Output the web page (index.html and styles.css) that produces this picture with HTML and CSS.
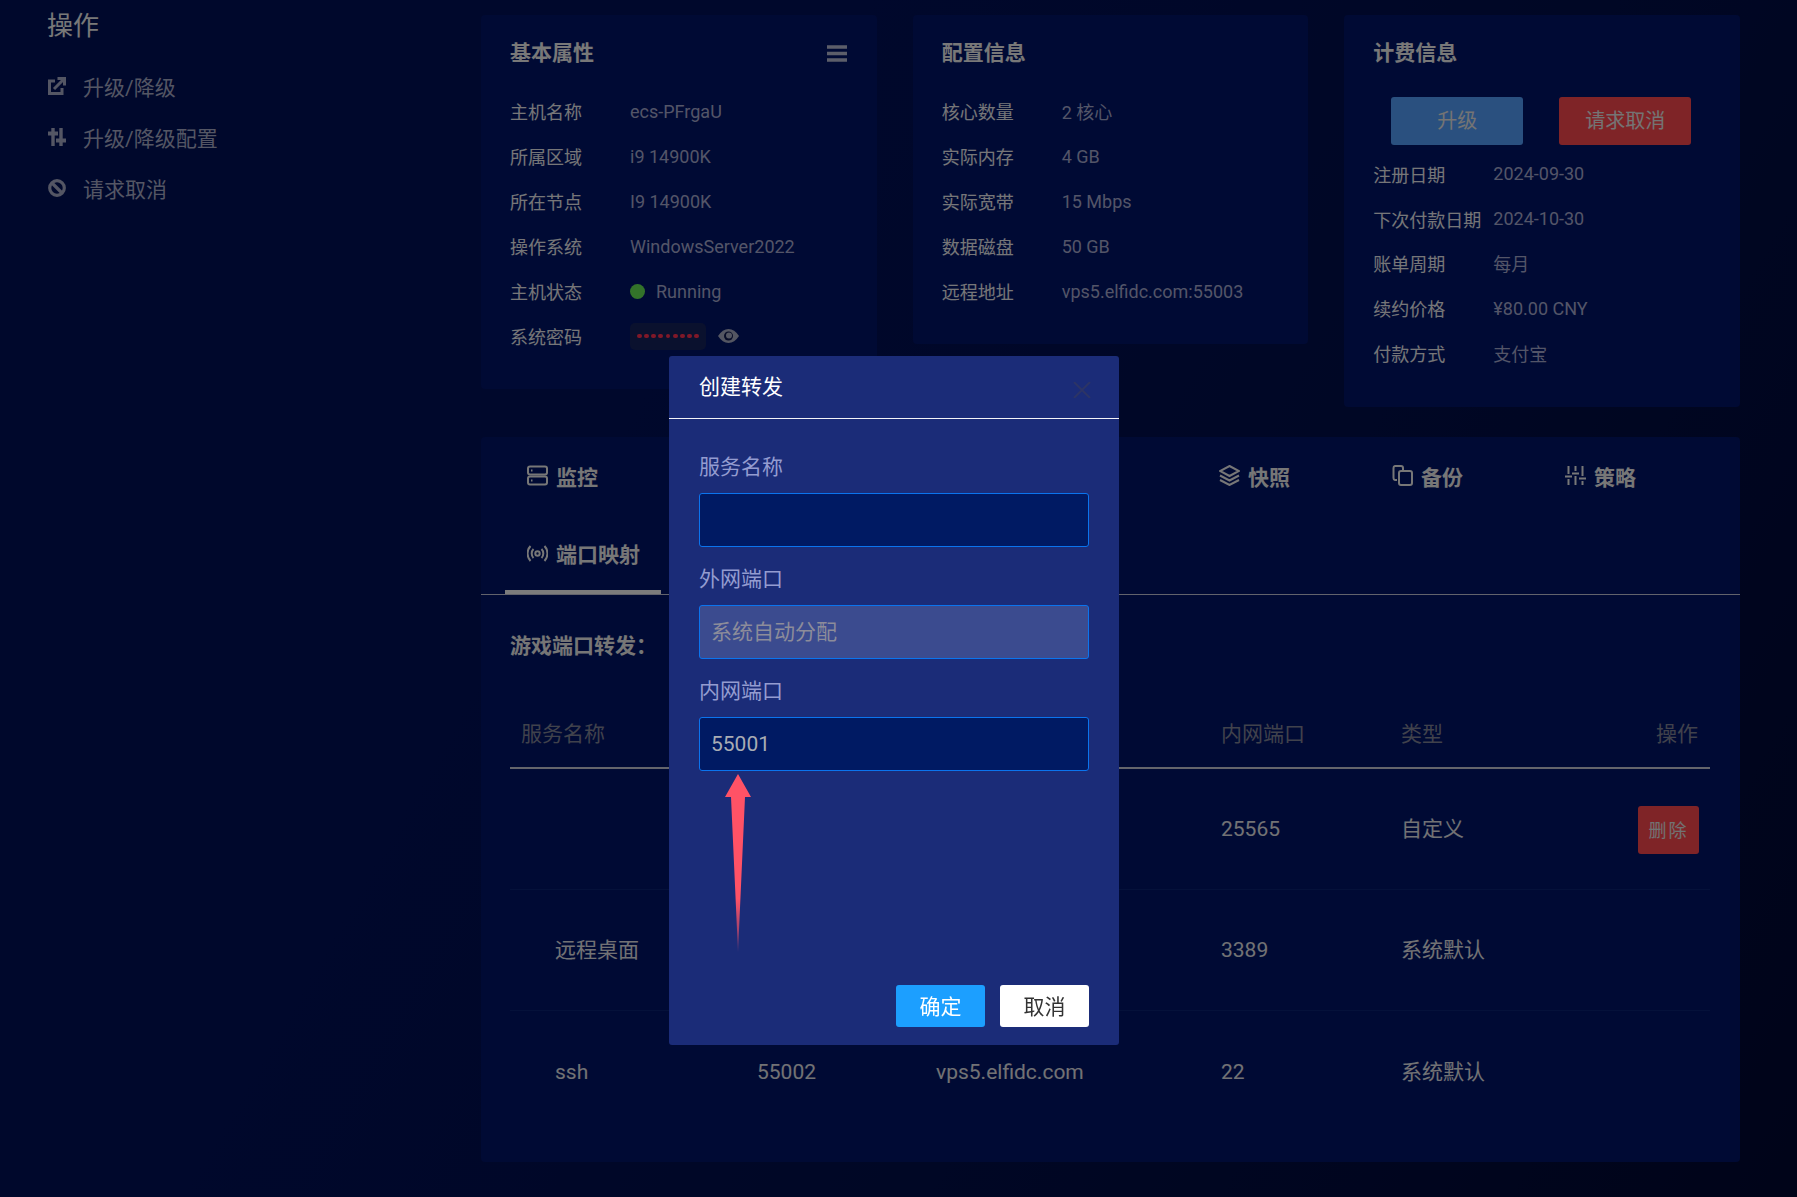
FILE: index.html
```html
<!DOCTYPE html>
<html lang="zh-CN">
<head>
<meta charset="utf-8">
<title>创建转发</title>
<link rel="stylesheet" href="styles.css">
</head>
<body>
<div class="page">
  <aside class="sidebar">
    <h2 class="side-title">操作</h2>
    <ul class="side-menu">
      <li class="side-item">
        <svg class="side-icon" viewBox="0 0 18 18"><path d="M7 4H1.500v12.500H14V11" fill="none" stroke="currentColor" stroke-width="3"/><path d="M6 12 15 3M9.500 1.500H16.500V8.500" fill="none" stroke="currentColor" stroke-width="3"/></svg>
        <span>升级/降级</span>
      </li>
      <li class="side-item">
        <svg class="side-icon" viewBox="0 0 18 18"><path d="M5 0v18M13 0v18" fill="none" stroke="currentColor" stroke-width="3.400"/><path d="M0 3.500h10v4H0zM8 10.500h10v4H8z" fill="currentColor"/></svg>
        <span>升级/降级配置</span>
      </li>
      <li class="side-item">
        <svg class="side-icon" viewBox="0 0 18 18"><circle cx="9" cy="9" r="7.300" fill="none" stroke="currentColor" stroke-width="3.200"/><path d="M4 4l10 10" fill="none" stroke="currentColor" stroke-width="3.200"/></svg>
        <span>请求取消</span>
      </li>
    </ul>
  </aside>

  <main class="main">
    <div class="info-grid">
      <section class="card card-basic">
        <header class="card-head">
          <h3 class="card-title">基本属性</h3>
          <svg class="bars" viewBox="0 0 20 17"><path d="M0 2h20M0 8.500h20M0 15h20" fill="none" stroke="currentColor" stroke-width="3.400"/></svg>
        </header>
        <dl class="rows">
          <div class="row"><dt>主机名称</dt><dd>ecs-PFrgaU</dd></div>
          <div class="row"><dt>所属区域</dt><dd>i9 14900K</dd></div>
          <div class="row"><dt>所在节点</dt><dd>I9 14900K</dd></div>
          <div class="row"><dt>操作系统</dt><dd>WindowsServer2022</dd></div>
          <div class="row"><dt>主机状态</dt><dd class="status"><i class="dot"></i>Running</dd></div>
          <div class="row"><dt>系统密码</dt><dd class="password"><span class="pw-chip"><i></i><i></i><i></i><i></i><i></i><i></i><i></i><i></i><i></i></span>
            <svg class="eye" viewBox="0 0 21 14"><path d="M0 7C3 2.500 6.500 0 10.500 0S18 2.500 21 7c-3 4.500-6.500 7-10.500 7S3 11.500 0 7z" fill="currentColor"/><circle cx="10.500" cy="7" r="4.500" fill="#101a50"/><circle cx="11" cy="6.500" r="3" fill="currentColor"/></svg>
          </dd></div>
        </dl>
      </section>

      <section class="card">
        <header class="card-head"><h3 class="card-title">配置信息</h3></header>
        <dl class="rows">
          <div class="row"><dt>核心数量</dt><dd>2 核心</dd></div>
          <div class="row"><dt>实际内存</dt><dd>4 GB</dd></div>
          <div class="row"><dt>实际宽带</dt><dd>15 Mbps</dd></div>
          <div class="row"><dt>数据磁盘</dt><dd>50 GB</dd></div>
          <div class="row"><dt>远程地址</dt><dd>vps5.elfidc.com:55003</dd></div>
        </dl>
      </section>

      <section class="card card-bill">
        <header class="card-head"><h3 class="card-title">计费信息</h3></header>
        <div class="bill-actions">
          <button class="btn btn-blue" type="button">升级</button>
          <button class="btn btn-red" type="button">请求取消</button>
        </div>
        <dl class="rows rows-bill">
          <div class="row"><dt>注册日期</dt><dd>2024-09-30</dd></div>
          <div class="row"><dt>下次付款日期</dt><dd>2024-10-30</dd></div>
          <div class="row"><dt>账单周期</dt><dd>每月</dd></div>
          <div class="row"><dt>续约价格</dt><dd>¥80.00 CNY</dd></div>
          <div class="row"><dt>付款方式</dt><dd>支付宝</dd></div>
        </dl>
      </section>
    </div>

    <section class="panel">
      <nav class="tabs">
        <a class="tab">
          <svg class="tab-icon" viewBox="0 0 21 21"><rect x="1" y="1.500" width="19" height="8" rx="2"/><rect x="1" y="11.500" width="19" height="8" rx="2"/><path d="M4 5.500h1.500M4 15.500h1.500"/></svg>
          <span>监控</span>
        </a>
        <a class="tab"></a>
        <a class="tab"></a>
        <a class="tab"></a>
        <a class="tab">
          <svg class="tab-icon" viewBox="0 0 21 21"><path d="M10.500 1 20 6l-9.500 5L1 6z"/><path d="M1 10.500l9.500 5 9.500-5M1 15l9.500 5 9.500-5"/></svg>
          <span>快照</span>
        </a>
        <a class="tab">
          <svg class="tab-icon" viewBox="0 0 21 21"><path d="M5 15H3a2 2 0 0 1-1.500-2V3A2 2 0 0 1 3 1h6a2 2 0 0 1 2 2v2"/><rect x="7" y="6" width="13" height="14" rx="2"/></svg>
          <span>备份</span>
        </a>
        <a class="tab">
          <svg class="tab-icon" viewBox="0 0 21 21"><path d="M3.500 1v8M3.500 14v6M10.500 1v5M10.500 11v9M17.500 1v10M17.500 16v4M0 11.500h7M7 8.500h7M14 13.500h7"/></svg>
          <span>策略</span>
        </a>
        <a class="tab tab-active">
          <svg class="tab-icon" viewBox="0 0 21 21"><circle cx="10.500" cy="10.500" r="2.200"/><path d="M6.500 6a6.500 6.500 0 0 0 0 9M14.500 6a6.500 6.500 0 0 1 0 9M3.500 3a11 11 0 0 0 0 15M17.500 3a11 11 0 0 1 0 15"/></svg>
          <span>端口映射</span>
        </a>
      </nav>

      <div class="forward">
        <h3 class="forward-title">游戏端口转发：</h3>
        <div class="table">
          <div class="t-row t-head">
            <span>服务名称</span><span></span><span></span><span>内网端口</span><span>类型</span><span class="t-op">操作</span>
          </div>
          <div class="t-row">
            <span class="t-name"></span><span></span><span></span><span>25565</span><span class="t-cjk">自定义</span>
            <span class="t-op"><button class="btn-del" type="button">删除</button></span>
          </div>
          <div class="t-row">
            <span class="t-name t-cjk">远程桌面</span><span></span><span></span><span>3389</span><span class="t-cjk">系统默认</span><span class="t-op"></span>
          </div>
          <div class="t-row t-last">
            <span class="t-name">ssh</span><span>55002</span><span>vps5.elfidc.com</span><span>22</span><span class="t-cjk">系统默认</span><span class="t-op"></span>
          </div>
        </div>
      </div>
    </section>
  </main>
</div>

<div class="overlay"></div>

<div class="modal">
  <header class="modal-head">
    <h3 class="modal-title">创建转发</h3>
    <svg class="modal-close" viewBox="0 0 18 16"><path d="M1 0l16 16M17 0 1 16" fill="none" stroke="currentColor" stroke-width="2"/></svg>
  </header>
  <form class="modal-body">
    <label class="field"><span class="field-label">服务名称</span><input class="input" type="text"></label>
    <label class="field"><span class="field-label">外网端口</span><input class="input input-off" type="text" placeholder="系统自动分配" disabled></label>
    <label class="field"><span class="field-label">内网端口</span><input class="input" type="text" value="55001"></label>
  </form>
  <footer class="modal-foot">
    <button class="mbtn mbtn-ok" type="button">确定</button>
    <button class="mbtn mbtn-cancel" type="button">取消</button>
  </footer>
  <svg class="arrow" viewBox="0 0 26 178">
    <defs><linearGradient id="arrowFade" x1="0" y1="0" x2="0" y2="1"><stop offset="0.700" stop-color="#ff5266"/><stop offset="1" stop-color="#ff5266" stop-opacity="0.300"/></linearGradient></defs>
    <polygon points="13,0 26,23 20,23 13,178 6,23 0,23" fill="url(#arrowFade)"/>
  </svg>
</div>
</body>
</html>
```

FILE: styles.css
```css
* { box-sizing: border-box; }

html, body {
  margin: 0;
  height: 1197px;
  overflow: hidden;
}

body {
  font-family: Roboto, "Noto Sans CJK SC", sans-serif;
  color: #f4f4f8;
  background: linear-gradient(120deg, #001058 0%, #001058 35%, #000e4a 65%, #000832 100%);
}

h2, h3, ul, dl, dd { margin: 0; padding: 0; }
ul { list-style: none; }

.page {
  display: flex;
  align-items: flex-start;
  height: 1197px;
}

/* sidebar */
.sidebar {
  flex: 0 0 481px;
  padding: 8px 0 0 47px;
}

.side-title {
  font-size: 26px;
  font-weight: 400;
  line-height: 36px;
  margin-bottom: 16px;
  color: #f0f0f0;
}

.side-item {
  display: flex;
  align-items: center;
  gap: 17px;
  height: 51px;
  padding-left: 1px;
  font-size: 21px;
  color: #a8acc8;
}

.side-icon {
  flex: none;
  width: 18px;
  height: 18px;
}

/* main */
.main {
  flex: 0 0 1259px;
  padding-top: 15px;
}

.info-grid {
  display: grid;
  grid-template-columns: repeat(3, 1fr);
  gap: 36px;
  align-items: start;
}

.card {
  background: #001468;
  border-radius: 4px;
  padding: 23px 29px 30px;
}

.card-bill { padding-bottom: 32px; }

.card-head {
  display: flex;
  justify-content: space-between;
  align-items: center;
  height: 30px;
  margin-bottom: 20.500px;
}

.card-title {
  font-size: 21px;
  font-weight: 700;
  line-height: 30px;
  color: #f0f0f0;
}

.bars {
  width: 20px;
  height: 17px;
  margin-right: 1px;
  color: #b8bcd4;
}

.rows { font-size: 18px; }

.row {
  display: flex;
  align-items: center;
  height: 45px;
}

.rows-bill .row { height: 44.800px; }

.row dt {
  flex: 0 0 120px;
  white-space: nowrap;
  color: #ececf0;
}

.row dd { color: #a6aad0; }

.status {
  display: flex;
  align-items: center;
  gap: 11px;
}

.dot {
  width: 15px;
  height: 15px;
  border-radius: 50%;
  background: #67e655;
}

.password {
  display: flex;
  align-items: center;
  gap: 12px;
}

.pw-chip {
  display: flex;
  align-items: center;
  justify-content: center;
  gap: 2.400px;
  width: 76px;
  height: 27px;
  border-radius: 5px;
  background: #14225c;
}

.pw-chip i {
  width: 4.800px;
  height: 4.800px;
  border-radius: 50%;
  background: #ff3050;
}

.eye {
  width: 21px;
  height: 14px;
  color: #a8acc4;
}

.bill-actions {
  display: flex;
  gap: 36px;
  padding: 8.500px 0 0 18px;
  margin-bottom: 6.500px;
}

.btn {
  width: 132px;
  height: 48px;
  border: 0;
  border-radius: 3px;
  font: inherit;
  font-size: 20px;
  line-height: 46px;
  padding-bottom: 2px;
  color: #e8e8e8;
}

.btn-blue { background: #55a0fe; }
.btn-red { background: #ff484f; }

/* panel */
.panel {
  margin-top: 30px;
  height: 725px;
  background: #001468;
  border-radius: 4px;
}

.tabs {
  display: grid;
  grid-template-columns: repeat(7, 156px);
  grid-template-rows: 79px 78px;
  column-gap: 17px;
  padding-left: 24px;
  border-bottom: 1px solid #c4c6d8;
}

.tab {
  display: flex;
  align-items: center;
  gap: 8px;
  padding: 0 0 2px 22px;
  font-size: 21px;
  font-weight: 700;
  color: #eeeeee;
}

.tab-active {
  padding-bottom: 4px;
  box-shadow: inset 0 -4px 0 #f8f8f8;
}

.tab-icon {
  flex: none;
  width: 21px;
  height: 21px;
  fill: none;
  stroke: currentColor;
  stroke-width: 2;
}

.forward { padding: 36px 30px 0 29px; }

.forward-title {
  font-size: 21px;
  font-weight: 700;
  line-height: 30px;
  color: #ececec;
}

.table {
  margin-top: 39px;
  font-size: 21px;
}

.t-row {
  display: grid;
  grid-template-columns: 236px 179px 285px 180px 1fr 72px;
  align-items: center;
  height: 121px;
  border-bottom: 1px solid #0a2274;
  color: #e4e4e8;
}

.t-row > span { padding-left: 11px; }

.t-row > .t-op {
  padding: 0 12px 0 0;
  text-align: right;
}

.t-head {
  height: 69px;
  padding-bottom: 4px;
  border-bottom: 2px solid #c8cad8;
  color: #808498;
}

.t-row > .t-name { padding-left: 45px; }
.t-row > .t-cjk { padding-bottom: 4px; }
.t-last { border-bottom: 0; }

.btn-del {
  display: block;
  margin: 2px 1px 0 auto;
  width: 61px;
  height: 48px;
  padding: 0 0 3px;
  border: 0;
  border-radius: 3px;
  background: #ff484f;
  font: inherit;
  font-size: 18px;
  letter-spacing: 2px;
  color: #e4e4e4;
}

/* overlay + modal */
.overlay {
  position: fixed;
  inset: 0;
  background: rgba(0, 0, 0, 0.5);
}

.modal {
  position: fixed;
  left: 669px;
  top: 356px;
  width: 450px;
  height: 689px;
  display: flex;
  flex-direction: column;
  background: #1b2c78;
  border-radius: 3px;
}

.modal-head {
  flex: none;
  display: flex;
  align-items: center;
  justify-content: space-between;
  height: 63px;
  padding: 0 28px 0 30px;
  border-bottom: 1px solid #f4f4f8;
}

.modal-title {
  font-size: 21px;
  font-weight: 400;
  line-height: 30px;
  color: #ffffff;
}

.modal-close {
  width: 18px;
  height: 16px;
  margin-top: 5px;
  color: #2c3466;
}

.modal-body {
  display: flex;
  flex-direction: column;
  gap: 18px;
  padding: 34px 30px 0;
}

.field { display: block; }

.field-label {
  display: block;
  height: 28px;
  margin-bottom: 12px;
  font-size: 21px;
  line-height: 28px;
  color: #949cd0;
}

.input {
  display: block;
  width: 100%;
  height: 54px;
  padding: 0 11px;
  border: 1.500px solid #0b74ee;
  border-radius: 3px;
  outline: 0;
  background: #001a63;
  font-family: inherit;
  font-size: 21px;
  color: #a8acb4;
}

.input-off { background: #3b4b8f; }

.input-off::placeholder {
  color: #8c8c9a;
  opacity: 1;
}

.modal-foot {
  margin-top: auto;
  display: flex;
  justify-content: flex-end;
  gap: 15px;
  padding: 0 30px 18px;
}

.mbtn {
  width: 89px;
  height: 42px;
  padding: 0 0 2px;
  border: 0;
  border-radius: 3px;
  font: inherit;
  font-size: 21px;
}

.mbtn-ok {
  background: #1c9fff;
  color: #ffffff;
}

.mbtn-cancel {
  background: #ffffff;
  color: #333333;
}

.arrow {
  position: absolute;
  left: 56px;
  top: 418px;
  width: 26px;
  height: 178px;
}
```
